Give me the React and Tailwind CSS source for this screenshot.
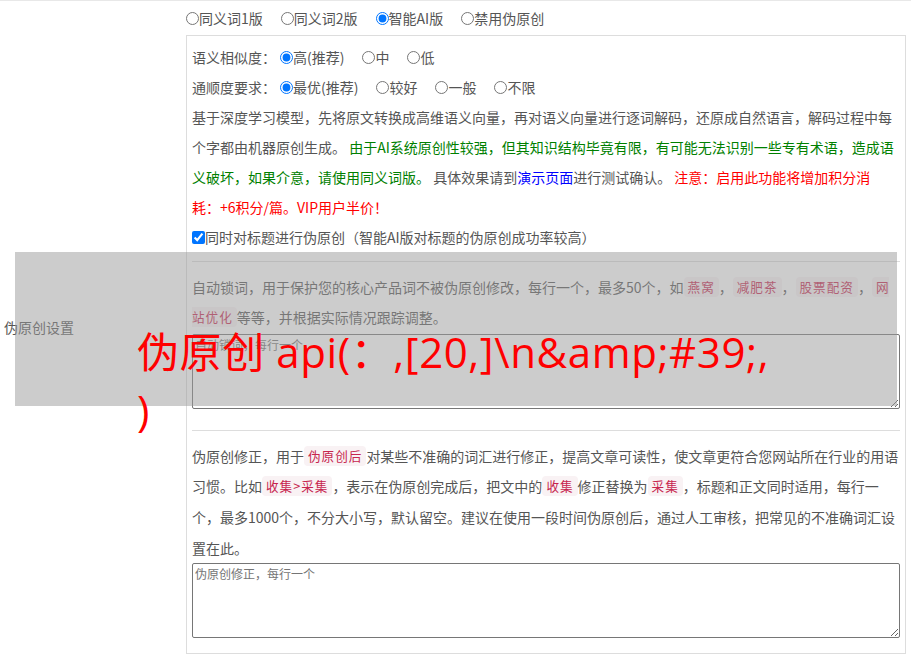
import React from "react";

const Tag = ({ children, cls = "px-[4px] rounded-[4px]" }) => (
  <span
    className={`inline-block align-top mt-[5px] h-[20px] leading-[20px] bg-[#f9f2f4] text-[#c7254e] text-[12.6px] tracking-[1px] ${cls}`}
  >
    {children}
  </span>
);

const Radio = ({ label, checked, name }) => (
  <label className="flex items-center mr-[18px]">
    <input
      type="radio"
      name={name}
      defaultChecked={checked}
      className="m-0 w-[13px] h-[13px]"
    />
    <span>{label}</span>
  </label>
);

const Line = ({ children, h = "h-[30px] leading-[30px]" }) => (
  <div className={`${h} whitespace-nowrap`}>{children}</div>
);

export default function App() {
  return (
    <div className="relative w-[911px] h-[658px] overflow-hidden bg-white font-['Noto_Sans_CJK_SC',sans-serif] text-[14px] text-[#555] [text-spacing-trim:space-all]">
      <div className="flex border-t border-[#e8e8e8]">
        <div className="w-[186px] flex items-center pl-[4px]">伪原创设置</div>
        <div className="w-[720px]">
          <div className="h-[34px] flex items-center">
            <Radio name="v" label="同义词1版" />
            <Radio name="v" label="同义词2版" />
            <Radio name="v" label="智能AI版" checked />
            <Radio name="v" label="禁用伪原创" />
          </div>
          <div className="border border-[#ddd] px-[5px] pt-[6px] pb-[15px]">
            <div className="h-[30px] flex items-center">
              <span className="mr-[4px]">语义相似度：</span>
              <Radio name="s" label="高(推荐)" checked />
              <Radio name="s" label="中" />
              <Radio name="s" label="低" />
            </div>
            <div className="h-[30px] flex items-center">
              <span className="mr-[4px]">通顺度要求：</span>
              <Radio name="t" label="最优(推荐)" checked />
              <Radio name="t" label="较好" />
              <Radio name="t" label="一般" />
              <Radio name="t" label="不限" />
            </div>
            <Line>基于深度学习模型，先将原文转换成高维语义向量，再对语义向量进行逐词解码，还原成自然语言，解码过程中每</Line>
            <Line>
              个字都由机器原创生成。{" "}
              <span className="text-[#008000]">由于AI系统原创性较强，但其知识结构毕竟有限，有可能无法识别一些专有术语，造成语</span>
            </Line>
            <Line>
              <span className="text-[#008000]">义破坏，如果介意，请使用同义词版。</span> 具体效果请到
              <span className="text-[#0000ff]">演示页面</span>进行测试确认。{" "}
              <span className="text-[#ff0000]">注意：启用此功能将增加积分消</span>
            </Line>
            <Line>
              <span className="text-[#ff0000]">耗：+6积分/篇。VIP用户半价！</span>
            </Line>
            <label className="h-[30px] flex items-center whitespace-nowrap">
              <input type="checkbox" defaultChecked className="m-0 w-[13px] h-[13px]" />
              <span>同时对标题进行伪原创（智能AI版对标题的伪原创成功率较高）</span>
            </label>

            <div className="mt-[9px] mb-[10px] border-t border-[#ddd]" />

            <Line>
              自动锁词，用于保护您的核心产品词不被伪原创修改，每行一个，最多50个，如<Tag>燕窝</Tag>，<Tag>减肥茶</Tag>，<Tag>股票配资</Tag>，<Tag cls="pl-[4px] rounded-l-[4px]">网</Tag>
            </Line>
            <Line>
              <Tag cls="pr-[4px] rounded-r-[4px]">站优化</Tag>等等，并根据实际情况跟踪调整。
            </Line>
            <textarea
              placeholder="自动锁词，每行一个"
              className="block mt-[2px] w-full h-[75px] p-[2px] border border-[#767676] rounded-[2px] text-[12px] leading-[16px] font-['Noto_Sans_CJK_SC',sans-serif] placeholder:text-[#757575]"
            />

            <div className="mt-[21px] mb-[10px] border-t border-[#ddd]" />

            <Line>
              伪原创修正，用于<Tag>伪原创后</Tag>对某些不准确的词汇进行修正，提高文章可读性，使文章更符合您网站所在行业的用语
            </Line>
            <Line h="h-[31px] leading-[31px]">
              习惯。比如<Tag>收集&gt;采集</Tag>，表示在伪原创完成后，把文中的<Tag>收集</Tag>修正替换为<Tag>采集</Tag>，标题和正文同时适用，每行一
            </Line>
            <Line h="h-[31px] leading-[31px]">
              个，最多1000个，不分大小写，默认留空。建议在使用一段时间伪原创后，通过人工审核，把常见的不准确词汇设
            </Line>
            <Line>置在此。</Line>
            <textarea
              placeholder="伪原创修正，每行一个"
              className="block w-full h-[75px] p-[2px] border border-[#767676] rounded-[2px] text-[12px] leading-[16px] font-['Noto_Sans_CJK_SC',sans-serif] placeholder:text-[#757575]"
            />
          </div>
        </div>
      </div>

      <div className="absolute left-[15px] top-[252px] w-[882px] h-[154px] bg-[rgba(153,153,153,0.5)]" />
      <div className="absolute left-[137px] top-[323px] font-['Open_Sans','Noto_Sans_CJK_SC',sans-serif] text-[42px] leading-[58px] tracking-[0.6px] text-[#ff0000] whitespace-nowrap">
        {"伪原创 api(：,[20,]\\n&amp;#39;,"}
        <br />
        {")"}
      </div>
    </div>
  );
}
